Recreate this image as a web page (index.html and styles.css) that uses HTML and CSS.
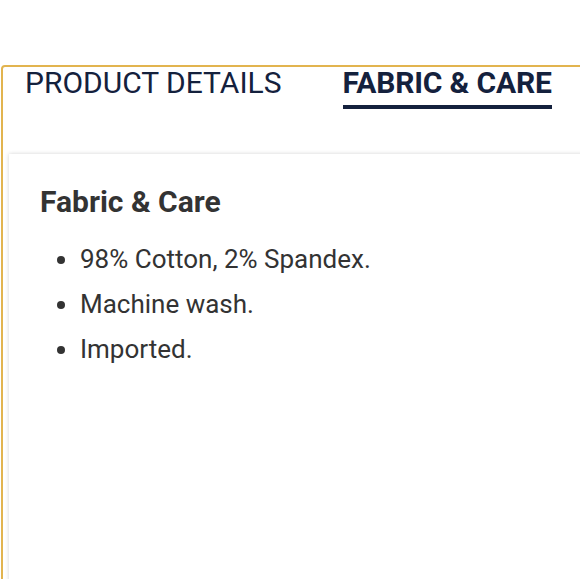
FILE: index.html
```html
<!DOCTYPE html>
<html>
<head>
<meta charset="utf-8">
<link rel="stylesheet" href="styles.css">
</head>
<body>
<div class="frame">
  <div class="tabs">
    <div class="tab">PRODUCT DETAILS</div>
    <div class="tab active">FABRIC &amp; CARE</div>
  </div>
  <div class="panel">
    <h2 class="title">Fabric &amp; Care</h2>
    <ul class="list">
      <li>98% Cotton, 2% Spandex.</li>
      <li>Machine wash.</li>
      <li>Imported.</li>
    </ul>
  </div>
</div>
</body>
</html>
```
FILE: styles.css
```css
html, body {
  margin: 0;
  padding: 0;
  background: #ffffff;
  overflow: hidden;
}
body {
  font-family: Roboto, "Liberation Sans", sans-serif;
  width: 580px;
  height: 579px;
}
.frame {
  margin-top: 65px;
  margin-left: 1px;
  width: 640px;
  height: 600px;
  border: 2px solid #e2b44f;
  border-radius: 4px;
  box-sizing: border-box;
}
.tabs {
  display: flex;
  height: 87px;
  padding-left: 22px;
  gap: 61px;
}
.tab {
  font-size: 30px;
  color: #14213d;
  line-height: 32px;
}
.tab.active {
  font-weight: 700;
  align-self: flex-start;
  border-bottom: 4px solid #14213d;
  padding-bottom: 6px;
  letter-spacing: -0.15px;
}
.panel {
  margin-left: 6px;
  background: #fff;
  box-shadow: 0 0 4px rgba(0,0,0,0.18);
  height: 600px;
  padding: 31px 0 0 31px;
  color: #333333;
}
.title {
  margin: 0 0 18px 0;
  font-size: 30px;
  font-weight: 700;
  line-height: 34px;
}
.list {
  margin: 0;
  padding-left: 40px;
  font-size: 26px;
  line-height: 45px;
}
```
